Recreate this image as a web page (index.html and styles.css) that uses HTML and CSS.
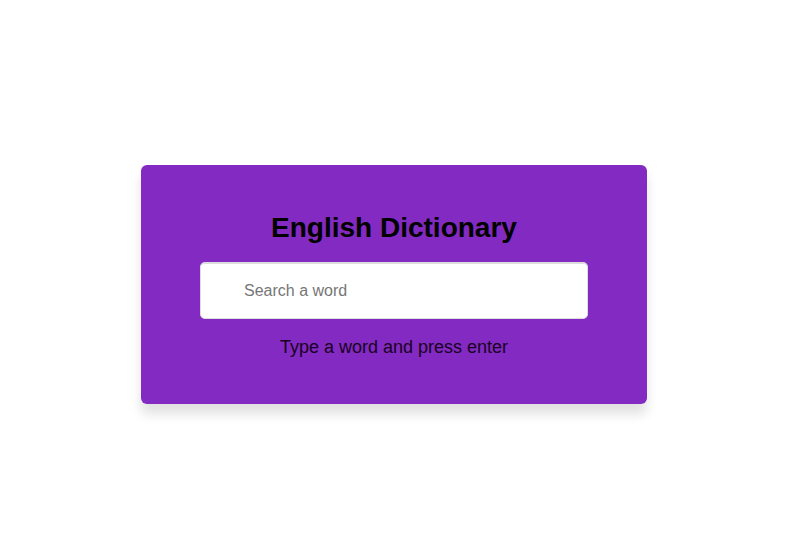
FILE: index.html
```html
<!DOCTYPE html>
<html>
<head>
<meta charset="utf-8">
<link rel="stylesheet" href="styles.css">
</head>
<body>
<main class="page">
  <section class="card">
    <h1 class="title">English Dictionary</h1>
    <input class="search" type="text" placeholder="Search a word">
    <p class="info">Type a word and press enter</p>
  </section>
</main>
</body>
</html>
```

FILE: styles.css
```css
* { box-sizing: border-box; }
html, body { margin: 0; padding: 0; background: #fff; }
body { font-family: "Liberation Sans", Arial, sans-serif; }
.page {
  min-height: 100vh;
  display: flex;
  align-items: center;
  justify-content: center;
}
.card {
  width: 506px;
  height: 239px;
  margin: 10px 3px 0 0;
  background: #822ac2;
  border-radius: 6px;
  box-shadow: 0 10px 12px rgba(0, 0, 0, 0.12);
  display: flex;
  flex-direction: column;
  align-items: center;
  padding-top: 47px;
}
.title {
  margin: 0;
  font-size: 28px;
  font-weight: bold;
  line-height: 32px;
  color: #000;
}
.search {
  margin-top: 18px;
  width: 388px;
  height: 57px;
  border: 1px solid #ddd;
  border-top-width: 2px;
  border-radius: 5px;
  background: #fff;
  padding: 0 0 0 43px;
  font-family: "Liberation Sans", Arial, sans-serif;
  font-size: 16px;
  outline: none;
}
.search::placeholder { color: #767676; }
.info {
  margin: 18px 0 0;
  font-size: 18px;
  line-height: 20px;
  color: #1a0022;
}
```
